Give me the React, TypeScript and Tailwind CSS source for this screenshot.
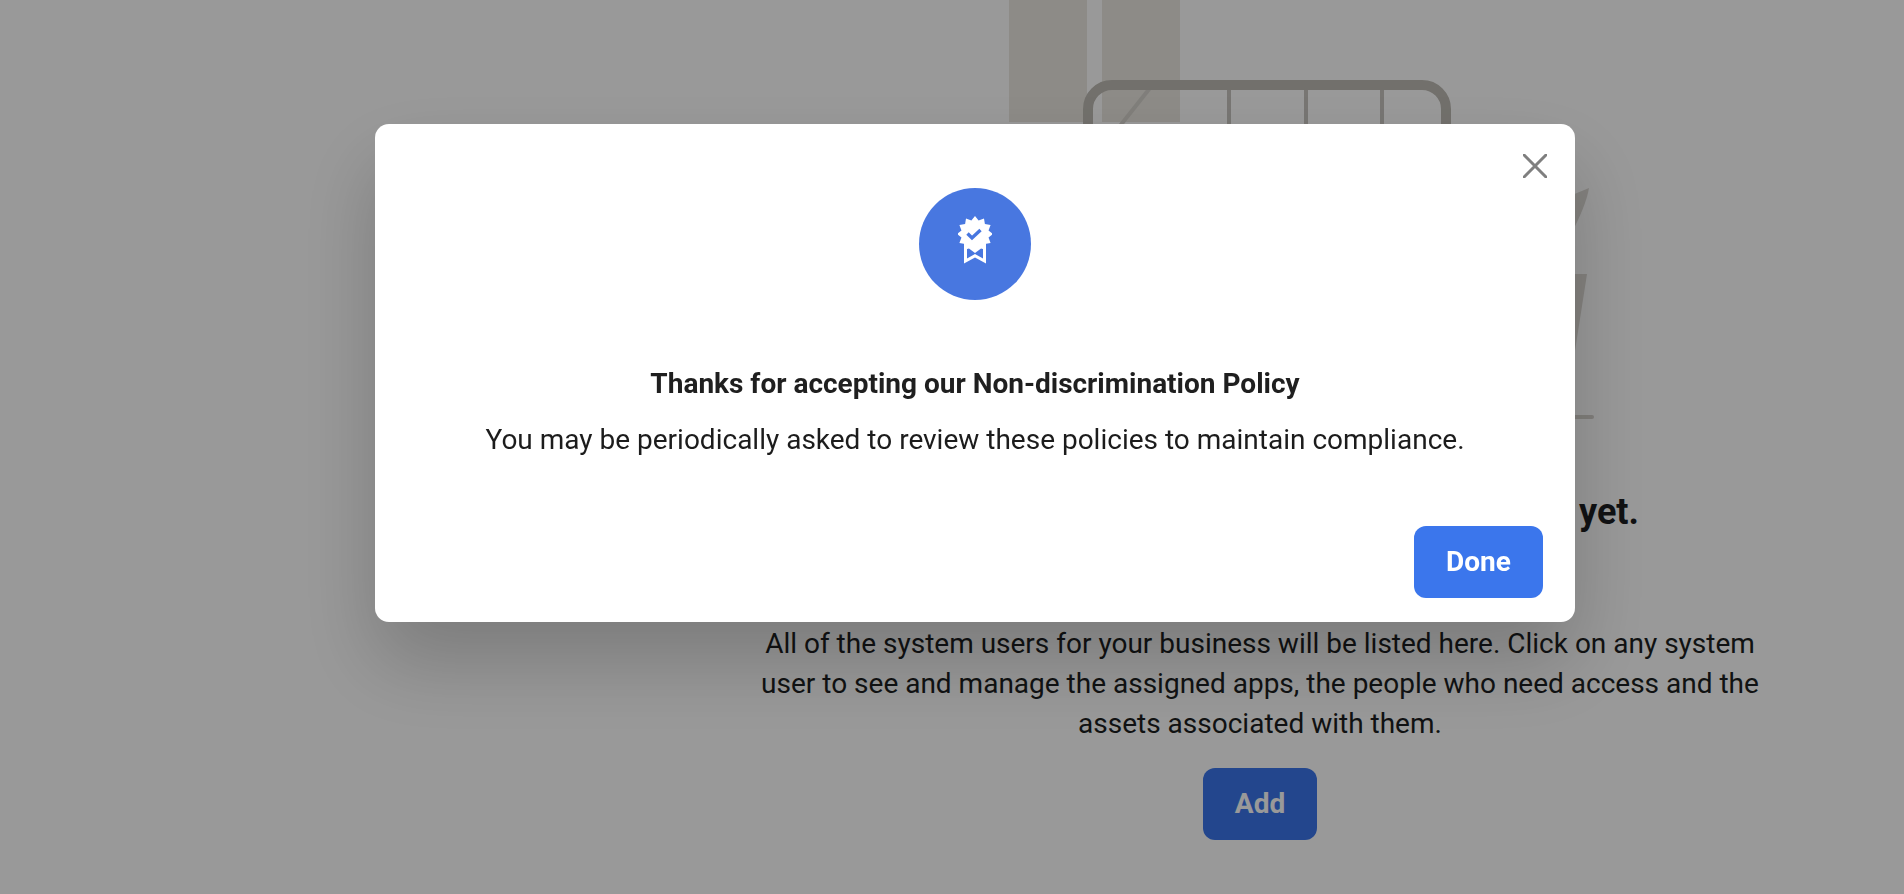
import React from 'react';

const FONT = "font-['Roboto','Liberation_Sans',sans-serif]";

// 12 point seal for the badge
const sealPoints = Array.from({ length: 24 }, (_, i) => {
  const r = i % 2 === 0 ? 18 : 14;
  const a = (Math.PI * i) / 12 - Math.PI / 2;
  return `${(17 + r * Math.cos(a)).toFixed(2)},${(18 + r * Math.sin(a)).toFixed(2)}`;
}).join(' ');

const BadgeIcon = () => (
  <svg width="34" height="48" viewBox="0 0 34 48" className="mb-2 block">
    <path d="M6 26V47.5L17 41.5L28 47.5V26Z" fill="#fff" />
    <path d="M9 31L17 37L25 31V42.5L17 38L9 42.5Z" fill="#4877e0" />
    <polygon points={sealPoints} fill="#fff" />
    <path d="M9.5 17.5L14 22L22.5 14" fill="none" stroke="#4877e0" strokeWidth="3.4" />
  </svg>
);

// Empty state drawing that sits behind the dialog
const Illustration = () => (
  <svg width="700" height="420" viewBox="910 0 700 420" className="block">
    <rect x="1009" y="0" width="78" height="122" fill="#ebe8e1" />
    <rect x="1102" y="0" width="78" height="122" fill="#ebe8e1" />
    <path d="M1150 88L1112 136" stroke="#d6d3cd" strokeWidth="4" />
    <path d="M1229 85V130M1306 85V130M1382 85V130" stroke="#c8c5c0" strokeWidth="4" />
    <path d="M1088 140V109A24 24 0 0 1 1112 85H1422A24 24 0 0 1 1446 109V140" fill="none" stroke="#bebbb4" strokeWidth="10" />
    <path d="M1560 200L1589 188Q1586 206 1570 236Z" fill="#dcd9d4" />
    <path d="M1560 274H1587L1572 370Z" fill="#dcd9d4" />
    <rect x="1540" y="415" width="54" height="4" rx="2" fill="#d6d3cd" />
  </svg>
);

export default function App() {
  return (
    <div className={`relative h-screen overflow-hidden bg-white ${FONT}`}>
      {/* Page under the dialog */}
      <div className="ml-[616px] flex flex-col items-center">
        <Illustration />
        <h2 className="mt-[72px] text-[36px] font-bold leading-10 whitespace-nowrap text-[#1c1e21]">
          Your business does not have system users yet.
        </h2>
        <p className="mt-[92px] w-[1010px] text-center text-[28px] leading-10 text-[#1c1e21]">
          All of the system users for your business will be listed here. Click on any system user to see and manage the assigned apps, the people who need access and the assets associated with them.
        </p>
        <button className="mt-[24px] h-[72px] w-[114px] rounded-xl bg-[#3b76ec] text-[28px] font-bold text-white">
          Add
        </button>
      </div>

      {/* Dialog */}
      <div className="fixed inset-0 bg-black/40">
        <div className="relative ml-[375px] mt-[124px] flex h-[498px] w-[1200px] flex-col items-center rounded-[14px] bg-white shadow-[0_40px_80px_rgba(0,0,0,0.2)]">
          <button className="absolute right-[28px] top-[30px] text-[#7f7f7f]">
            <svg width="24" height="24" viewBox="0 0 24 24" className="block">
              <path d="M1 1L23 23M23 1L1 23" fill="none" stroke="currentColor" strokeWidth="3" strokeLinecap="round" />
            </svg>
          </button>
          <div className="mt-16 flex h-28 w-28 items-center justify-center rounded-full bg-[#4877e0]">
            <BadgeIcon />
          </div>
          <h3 className="mt-[64px] text-[28px] font-bold leading-10 text-[#1f1f1f]">
            Thanks for accepting our Non-discrimination Policy
          </h3>
          <p className="mt-4 text-[28px] leading-10 text-[#1c1c1c]">
            You may be periodically asked to review these policies to maintain compliance.
          </p>
          <div className="mt-auto mb-6 flex w-full justify-end pr-8">
            <button className="h-[72px] w-[129px] rounded-xl bg-[#3b76ec] text-[28px] font-bold text-white">
              Done
            </button>
          </div>
        </div>
      </div>
    </div>
  );
}
